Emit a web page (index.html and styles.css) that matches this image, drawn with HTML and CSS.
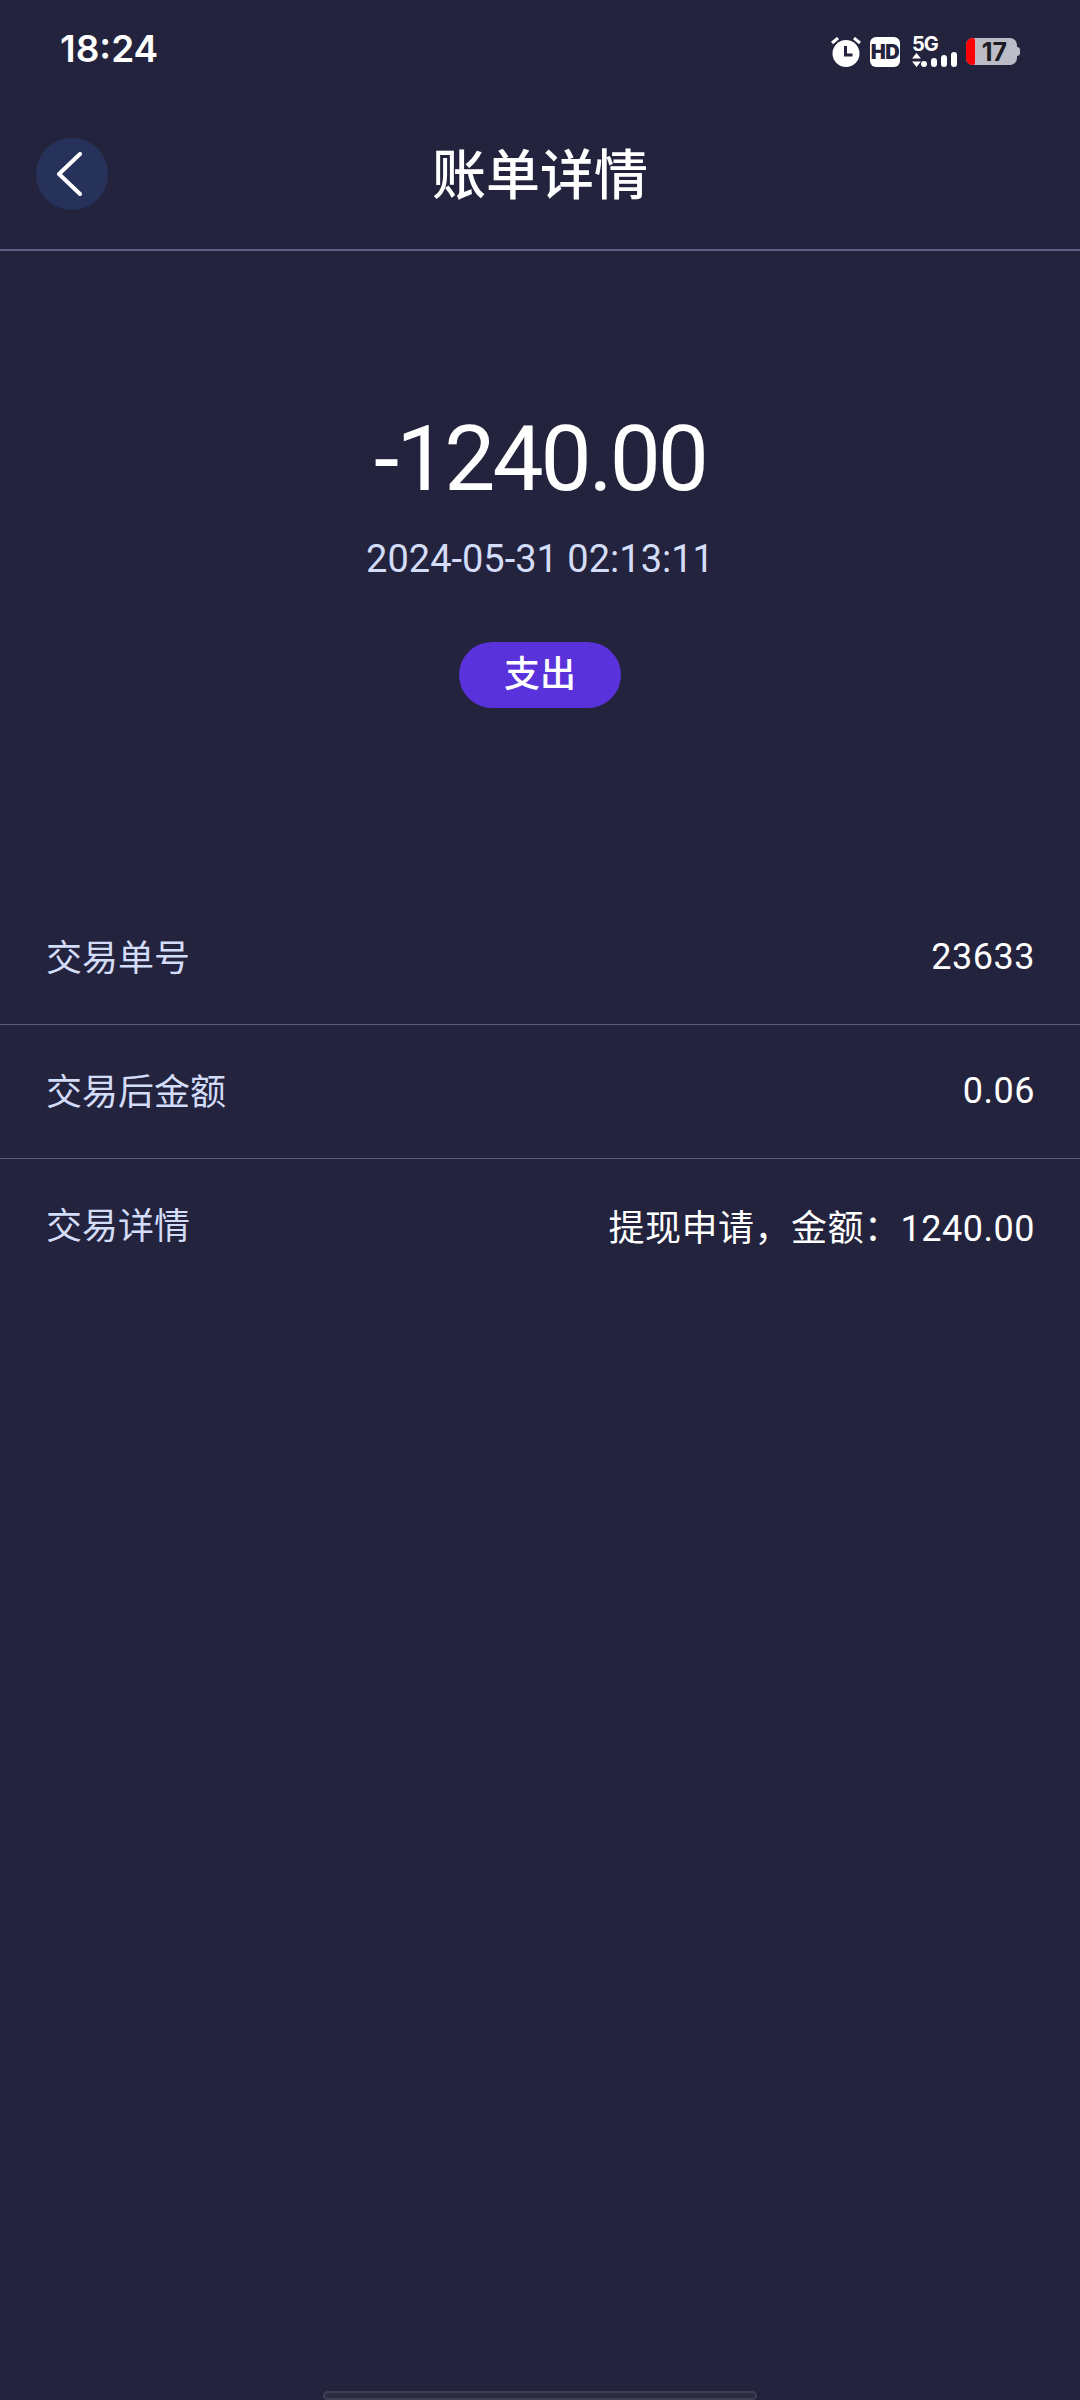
FILE: index.html
```html
<!DOCTYPE html>
<html lang="zh-CN">
  <head>
    <meta charset="UTF-8" />
    <meta name="viewport" content="width=device-width, initial-scale=1.0" />
    <title>账单详情</title>
    <link rel="stylesheet" href="styles.css">
  </head>
  <body>
    <div class="status-bar">
      <span class="time">18:24</span>
      <div class="status-icons">
        <svg class="alarm" width="30" height="30" viewBox="0 0 30 30">
          <circle cx="15" cy="16.500" r="13.500" fill="#fff"/>
          <path d="M14.500 9v9h7" fill="none" stroke="#23233d" stroke-width="3"/>
          <path d="M1 6l6-5M29 6l-6-5" stroke="#fff" stroke-width="3" fill="none"/>
        </svg>
        <span class="hd-badge">HD</span>
        <div class="signal">
          <div class="net">
            <span class="five-g">5G</span>
            <svg width="9" height="14" viewBox="0 0 9 14">
              <path d="M4.500 0L9 5.500H0zM0 8.500h9L4.500 14z" fill="#fff"/>
            </svg>
          </div>
          <div class="bars">
            <i class="bar-1"></i><i class="bar-2"></i><i class="bar-3"></i><i class="bar-4"></i>
          </div>
        </div>
        <div class="battery">
          <div class="battery-low"></div>
          <span class="battery-num">17</span>
        </div>
      </div>
    </div>

    <div class="header">
      <div class="back">
        <svg width="26" height="44" viewBox="0 0 26 44">
          <path d="M24 2L3 22l21 20" fill="none" stroke="#fff" stroke-width="4" stroke-linecap="round" stroke-linejoin="round"/>
        </svg>
      </div>
      <h1>账单详情</h1>
    </div>

    <div class="summary">
      <div class="amount">-1240.00</div>
      <div class="date">2024-05-31 02:13:11</div>
      <div class="tag">支出</div>
    </div>

    <div class="rows">
      <div class="row">
        <span class="label">交易单号</span>
        <span class="value">23633</span>
      </div>
      <div class="row">
        <span class="label">交易后金额</span>
        <span class="value">0.06</span>
      </div>
      <div class="row">
        <span class="label">交易详情</span>
        <span class="value">提现申请，金额：1240.00</span>
      </div>
    </div>

    <div class="home-bar"></div>
  </body>
</html>
```

FILE: styles.css
```css
html,
body {
  background-color: #23233d;
  padding: 0;
  margin: 0;
  width: 100%;
  height: 2400px;
  overflow: hidden;
  font-family: 'Roboto', 'Noto Sans CJK SC', sans-serif;
  color: #fff;
}

body {
  position: relative;
}

.status-bar {
  height: 100px;
  padding: 0 60px 4px;
  display: flex;
  align-items: center;
  justify-content: space-between;
  box-sizing: border-box;
}

.time {
  font-family: 'Inter', sans-serif;
  font-size: 37px;
  font-weight: 600;
}

.status-icons {
  display: flex;
  align-items: center;
  gap: 10px;
  padding-top: 7px;
}

.alarm {
  display: block;
  margin-right: -1px;
}

.hd-badge {
  width: 30px;
  height: 30px;
  background-color: #fff;
  color: #23233d;
  border-radius: 6px;
  font-family: 'Inter', sans-serif;
  font-size: 20px;
  font-weight: 900;
  line-height: 30px;
  letter-spacing: -0.5px;
  text-align: center;
}

.signal {
  display: flex;
  align-items: flex-end;
  height: 30px;
  width: 44px;
  margin-left: 2px;
  position: relative;
}

.net {
  width: 10px;
}

.five-g {
  position: absolute;
  left: 0;
  top: -2px;
  font-family: 'Inter', sans-serif;
  font-size: 20px;
  font-weight: 700;
  line-height: 18px;
  letter-spacing: -1px;
}

.net svg {
  display: block;
}

.bars {
  display: flex;
  align-items: flex-end;
  gap: 4px;
}

.bars i {
  display: block;
  width: 6px;
  border-radius: 3px;
  background-color: #fff;
}

.bar-1 { height: 6px; }
.bar-2 { height: 9px; }
.bar-3 { height: 12px; }
.bar-4 { height: 15px; }

.battery {
  width: 51px;
  height: 27px;
  margin-right: 3px;
  background-color: #bcbcc6;
  border-radius: 7px;
  position: relative;
  display: flex;
  align-items: center;
  justify-content: flex-end;
  padding-right: 10px;
  box-sizing: border-box;
}

.battery::after {
  content: '';
  position: absolute;
  right: -3px;
  top: 9px;
  width: 3px;
  height: 9px;
  border-radius: 0 3px 3px 0;
  background-color: #bcbcc6;
}

.battery-low {
  position: absolute;
  left: 0;
  top: 0;
  bottom: 0;
  width: 9px;
  background-color: #ff0000;
  border-radius: 7px 2px 2px 7px;
}

.battery-num {
  font-family: 'Inter', sans-serif;
  color: #1c1c24;
  font-size: 25px;
  font-weight: 700;
}

.header {
  height: 151px;
  position: relative;
  display: flex;
  align-items: center;
  justify-content: center;
  border-bottom: 2px solid #5d5d84;
  padding-bottom: 7px;
  box-sizing: border-box;
}

.header h1 {
  margin: 0;
  font-size: 54px;
  font-weight: 500;
}

.back {
  position: absolute;
  left: 36px;
  top: 38px;
  width: 72px;
  height: 72px;
  border-radius: 50%;
  background-color: #27325a;
  display: flex;
  align-items: center;
  justify-content: center;
  padding-right: 6px;
  box-sizing: border-box;
}

.summary {
  display: flex;
  flex-direction: column;
  align-items: center;
  padding-top: 155px;
  height: 640px;
  box-sizing: border-box;
}

.amount {
  font-size: 91px;
  line-height: 107px;
  font-weight: 400;
  letter-spacing: -3px;
}

.date {
  margin-top: 24px;
  font-size: 38px;
  line-height: 45px;
  color: #d3dcf8;
}

.tag {
  margin-top: 60px;
  width: 162px;
  height: 66px;
  border-radius: 33px;
  background-color: #5a32dc;
  font-size: 36px;
  font-weight: 500;
  line-height: 66px;
  text-align: center;
}

.row {
  height: 134px;
  padding: 0 45px 2px 46px;
  display: flex;
  align-items: center;
  justify-content: space-between;
  border-bottom: 1px solid #5a5a7a;
  box-sizing: border-box;
  font-size: 36px;
}

.row:last-child {
  border-bottom: 0;
}

.label {
  color: #d3dcf8;
  margin-bottom: 4px;
}

.value {
  letter-spacing: 0.5px;
}

.home-bar {
  position: absolute;
  left: 323px;
  bottom: 0;
  width: 434px;
  height: 9px;
  border: 2px solid #3e3e56;
  border-radius: 6px;
  background-color: #2c2c40;
  box-sizing: border-box;
}
```
